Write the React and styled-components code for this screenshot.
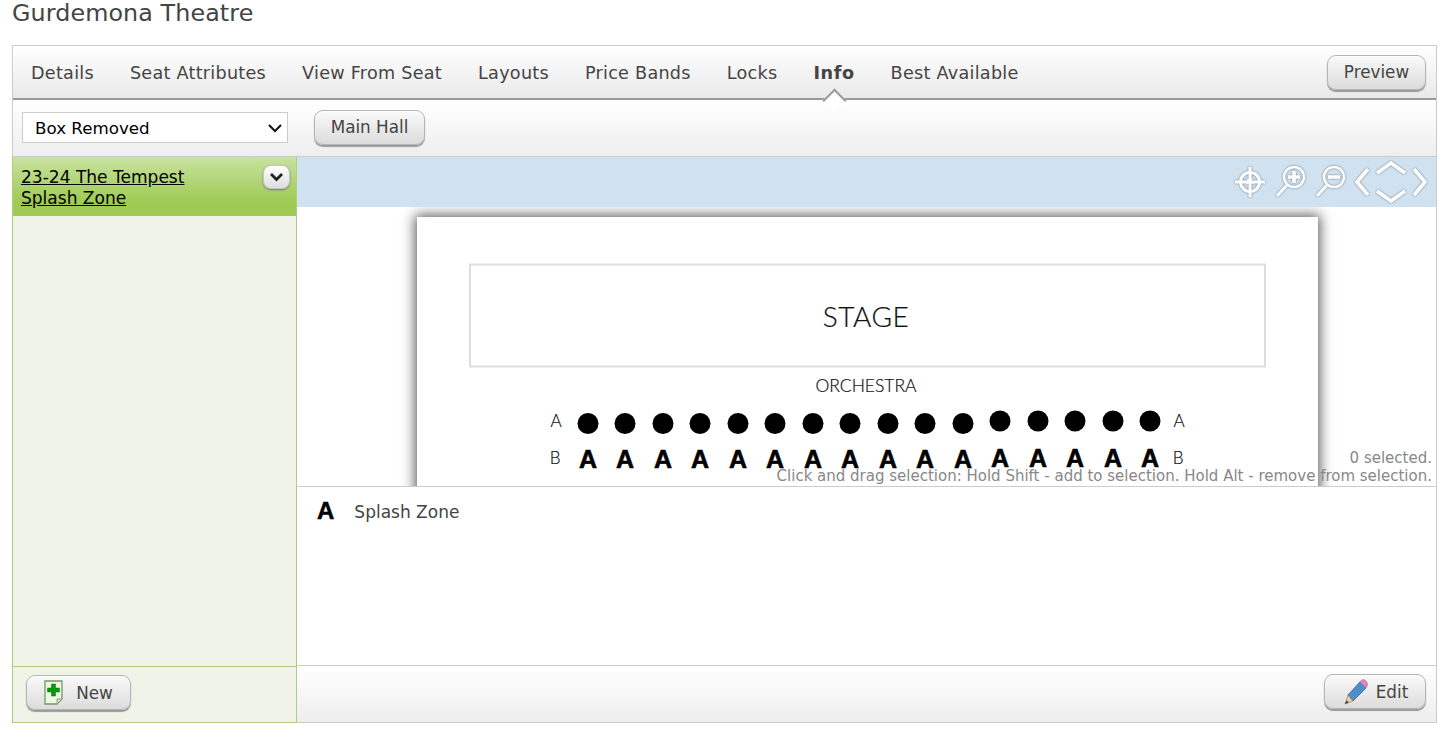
import React from "react";
import styled, { createGlobalStyle } from "styled-components";

const Global = createGlobalStyle`
  html, body { margin: 0; padding: 0; background: #fff; overflow: hidden; }
  body { font-family: "DejaVu Sans", Verdana, sans-serif; color: #444; }
`;

const Page = styled.div`
  padding: 0 19px 0 12px;
  height: 744px;
  box-sizing: border-box;
`;
const Title = styled.h1`
  margin: 0;
  height: 45px;
  font-size: 23.8px;
  font-weight: 400;
  line-height: 27px;
  color: #444;
  letter-spacing: 0.1px;
`;
const Panel = styled.div`
  height: 678px;
  box-sizing: border-box;
  border: 1px solid #ccc;
  display: flex;
  flex-direction: column;
`;
const TabBar = styled.div`
  height: 54px;
  flex: none;
  box-sizing: border-box;
  border-bottom: 2px solid #999;
  background: linear-gradient(#fff, #e9e9e9);
  display: flex;
  align-items: center;
  padding: 0 10px 0 0;
`;
const Tabs = styled.nav`
  display: flex;
  flex: 1;
  padding-top: 2px;
`;
const Tab = styled.a`
  position: relative;
  padding: 0 18px;
  font-size: 17.6px;
  letter-spacing: ${(p) => (p.$active ? "0.6px" : "0.27px")};
  font-weight: ${(p) => (p.$active ? 700 : 400)};
  color: #444;
  line-height: 24px;
  &::after {
    content: "";
    display: ${(p) => (p.$active ? "block" : "none")};
    position: absolute;
    left: 50%;
    bottom: -24px;
    width: 17px;
    height: 17px;
    margin-left: -8.5px;
    background: #fff;
    border-top: 2px solid #999;
    border-left: 2px solid #999;
    box-sizing: border-box;
    transform: rotate(45deg);
  }
`;
const Button = styled.button`
  display: inline-flex;
  align-items: center;
  justify-content: center;
  gap: ${(p) => p.$gap || 0}px;
  width: ${(p) => p.$w}px;
  height: 35px;
  padding: 0;
  border: 1px solid #b5b5b5;
  border-radius: 9px;
  background: linear-gradient(#fafafa, #dcdcdc);
  box-shadow: 0 2px 1px #999, inset 0 1px 0 #fff;
  font-family: inherit;
  font-size: 16.8px;
  color: #444;
`;
const ToolBar = styled.div`
  height: 57px;
  flex: none;
  box-sizing: border-box;
  border-bottom: 1px solid #ccc;
  background: linear-gradient(#fff, #eee);
  display: flex;
  align-items: center;
  padding: 0 0 2px 9px;
  gap: 26px;
`;
const SelectWrap = styled.div`
  position: relative;
  width: 266px;
  height: 31px;
`;
const Select = styled.select`
  appearance: none;
  display: block;
  width: 100%;
  height: 100%;
  box-sizing: border-box;
  border: 1px solid #ccc;
  border-radius: 0;
  background: #fff;
  padding: 2px 0 0 12px;
  font-family: inherit;
  font-size: 16.7px;
  color: #000;
`;
const SelectArrow = styled.svg`
  position: absolute;
  top: 11px;
  right: 5px;
  pointer-events: none;
`;
const Body = styled.div`
  flex: 1;
  min-height: 0;
  display: flex;
`;
const Sidebar = styled.aside`
  width: 285px;
  flex: none;
  box-sizing: border-box;
  margin: 0 0 -1px -1px;
  border-left: 1px solid #b0cc80;
  border-right: 1px solid #b0cc80;
  border-bottom: 1px solid #b0cc80;
  background: #f0f3e8;
  display: flex;
  flex-direction: column;
`;
const SideHead = styled.div`
  position: relative;
  height: 59px;
  flex: none;
  box-sizing: border-box;
  padding: 10px 8px 0;
  background: linear-gradient(#c9e2a0, #9fcb55 75%);
`;
const SideLink = styled.a`
  display: block;
  font-size: 17.05px;
  line-height: 21px;
  color: #000;
  text-decoration: underline;
`;
const MenuButton = styled.button`
  position: absolute;
  top: 8px;
  right: 6px;
  width: 27px;
  height: 24px;
  padding: 0;
  border: 1px solid #c6c6c6;
  border-radius: 8px;
  background: linear-gradient(#fff, #dedede);
  box-shadow: 0 1px 2px #777;
  display: flex;
  align-items: center;
  justify-content: center;
`;
const SideSpace = styled.div`
  flex: 1;
`;
const SideFoot = styled.div`
  height: 56px;
  flex: none;
  box-sizing: border-box;
  border-top: 1px solid #b0cc80;
  padding: 8px 0 0 13px;
`;
const Main = styled.main`
  flex: 1;
  min-width: 0;
  display: flex;
  flex-direction: column;
`;
const MapBar = styled.div`
  height: 50px;
  flex: none;
  background: #d0e2f0;
  display: flex;
  align-items: center;
  justify-content: flex-end;
  padding-right: 8px;
  gap: 8px;
`;
const MapIcon = styled.svg`
  display: block;
  filter: drop-shadow(0 0 1.2px #6f7c88);
`;
const MapView = styled.div`
  position: relative;
  height: 280px;
  flex: none;
  box-sizing: border-box;
  overflow: hidden;
  padding-top: 10px;
  border-bottom: 1px solid #ccc;
`;
const Sheet = styled.div`
  width: 901px;
  height: 400px;
  margin-left: 120px;
  background: #fff;
  box-shadow: 0 0 12px 2px #5c5c5c;
`;
const Status = styled.div`
  position: absolute;
  right: 4px;
  bottom: 1px;
  text-align: right;
  font-size: 15px;
  line-height: 18px;
  color: #888;
`;
const Info = styled.div`
  flex: 1;
  display: flex;
  align-items: flex-start;
  padding: 12px 0 0 20px;
  gap: 20px;
`;
const InfoMark = styled.span`
  font-family: "Liberation Sans", Arial, sans-serif;
  font-size: 24px;
  line-height: 24px;
  font-weight: 700;
  color: #000;
  -webkit-text-stroke: 0.5px #000;
`;
const InfoText = styled.span`
  font-size: 17px;
  line-height: 26px;
  color: #444;
`;
const MainFoot = styled.div`
  height: 57px;
  flex: none;
  box-sizing: border-box;
  border-top: 1px solid #ccc;
  background: linear-gradient(#fff, #eee);
  display: flex;
  justify-content: flex-end;
  padding: 8px 10px 0 0;
`;

const tabs = ["Details", "Seat Attributes", "View From Seat", "Layouts", "Price Bands", "Locks", "Info", "Best Available"];
const seatX = [588, 625, 663, 700, 738, 775, 813, 850, 888, 925, 963, 1000, 1038, 1075, 1113, 1150];
const labelProps = { textAnchor: "middle", fontFamily: "Lato", fontWeight: 300, fill: "#111", stroke: "#111", strokeWidth: 0.2 };

const SeatPlan = () => (
  <svg width="901" height="400" viewBox="417 217 901 400" style={{ display: "block" }}>
    <rect x="470" y="264.5" width="795" height="102" fill="#fff" stroke="#ddd" strokeWidth="2" />
    <text x="866" y="327" {...labelProps} fontSize="28" letterSpacing="0.5">STAGE</text>
    <text x="866" y="392" {...labelProps} fontSize="17.5">ORCHESTRA</text>
    <text x="556" y="427" {...labelProps} fontSize="17">A</text>
    <text x="1179" y="427" {...labelProps} fontSize="17">A</text>
    <text x="555" y="464" {...labelProps} fontSize="17">B</text>
    <text x="1178" y="464" {...labelProps} fontSize="17">B</text>
    {seatX.map((x) => (
      <circle key={x} cx={x} cy={x >= 1000 ? 421 : 423.5} r="10.5" fill="#000" />
    ))}
    {seatX.map((x) => (
      <text key={x} x={x} y={x >= 1000 ? 466.5 : 467.5} textAnchor="middle" fontFamily="Liberation Sans" fontWeight="700" fontSize="25" stroke="#000" strokeWidth="0.6" fill="#000">A</text>
    ))}
  </svg>
);

const Crosshair = () => (
  <MapIcon width="32" height="32" viewBox="0 0 32 32" fill="none" stroke="#fff" strokeWidth="3">
    <circle cx="16" cy="16" r="9.5" />
    <path d="M16 1v30M1 16h30" />
    <circle cx="16" cy="16" r="3" strokeWidth="1.8" strokeDasharray="2 1.5" />
  </MapIcon>
);
const Zoom = ({ plus }) => (
  <MapIcon width="32" height="32" viewBox="0 0 32 32" fill="none" stroke="#fff" strokeWidth="2.4">
    <circle cx="20" cy="11" r="10" />
    <path d="M13.5 18.5L3 30" strokeWidth="3" />
    <path d={plus ? "M14 11h12M20 5v12" : "M14 11h12"} strokeWidth="3.6" />
  </MapIcon>
);
const PanCluster = () => (
  <MapIcon width="74" height="42" viewBox="0 0 74 42" fill="none" stroke="#fff" strokeWidth="3.6">
    <path d="M14 8L3 21l11 13" />
    <path d="M60 8l11 13-11 13" />
    <path d="M23 12L37 2l14 10" />
    <path d="M23 30l14 10 14-10" />
  </MapIcon>
);
const DownChevron = () => (
  <svg width="15" height="10" viewBox="0 0 15 10" fill="none" stroke="#222" strokeWidth="2.8">
    <path d="M2 2l5.5 5.5L13 2" />
  </svg>
);
const NewIcon = () => (
  <svg width="19" height="25" viewBox="0 0 19 25">
    <path d="M1 1h17v18l-5 5H1z" fill="#eef5e6" stroke="#6f9a5e" strokeWidth="1.3" />
    <path d="M13 24v-5h5z" fill="#d5dfcc" stroke="#8aa97c" />
    <path d="M7.5 4h4v4h4v4h-4v4h-4v-4h-4V8h4z" fill="#0a9a10" stroke="#066e0a" strokeWidth="0.5" />
  </svg>
);
const PencilIcon = () => (
  <svg width="26" height="28" viewBox="0 0 26 28">
    <path d="M6 17L18 4l6 6-13 13z" fill="#4f8fc9" stroke="#2d5f8c" strokeWidth="0.8" />
    <path d="M18 4c2-3 4-3 6-1s2 4 0 7z" fill="#d98ab8" stroke="#a86490" strokeWidth="0.6" />
    <path d="M6 17l5 6-8 3z" fill="#e9cfa8" stroke="#8a7358" strokeWidth="0.6" />
    <path d="M4.8 22.5l-1.8 3.5 3.6-1.6z" fill="#333" />
  </svg>
);

export default function App() {
  return (
    <>
      <Global />
      <Page>
        <Title>Gurdemona Theatre</Title>
        <Panel>
          <TabBar>
            <Tabs>
              {tabs.map((t) => (
                <Tab key={t} $active={t === "Info"}>{t}</Tab>
              ))}
            </Tabs>
            <Button $w={99}>Preview</Button>
          </TabBar>
          <ToolBar>
            <SelectWrap>
              <Select defaultValue="Box Removed">
                <option>Box Removed</option>
              </Select>
              <SelectArrow width="16" height="10" viewBox="0 0 16 10" fill="none" stroke="#111" strokeWidth="2">
                <path d="M2 2l6 6 6-6" />
              </SelectArrow>
            </SelectWrap>
            <Button $w={111}>Main Hall</Button>
          </ToolBar>
          <Body>
            <Sidebar>
              <SideHead>
                <SideLink>23-24 The Tempest<br />Splash Zone</SideLink>
                <MenuButton aria-label="Menu"><DownChevron /></MenuButton>
              </SideHead>
              <SideSpace />
              <SideFoot>
                <Button $w={105} $gap={13}><NewIcon />New</Button>
              </SideFoot>
            </Sidebar>
            <Main>
              <MapBar>
                <Crosshair />
                <Zoom plus />
                <Zoom />
                <PanCluster />
              </MapBar>
              <MapView>
                <Sheet><SeatPlan /></Sheet>
                <Status>0 selected.<br />Click and drag selection: Hold Shift - add to selection. Hold Alt - remove from selection.</Status>
              </MapView>
              <Info>
                <InfoMark>A</InfoMark>
                <InfoText>Splash Zone</InfoText>
              </Info>
              <MainFoot>
                <Button $w={102} $gap={8}><PencilIcon />Edit</Button>
              </MainFoot>
            </Main>
          </Body>
        </Panel>
      </Page>
    </>
  );
}
